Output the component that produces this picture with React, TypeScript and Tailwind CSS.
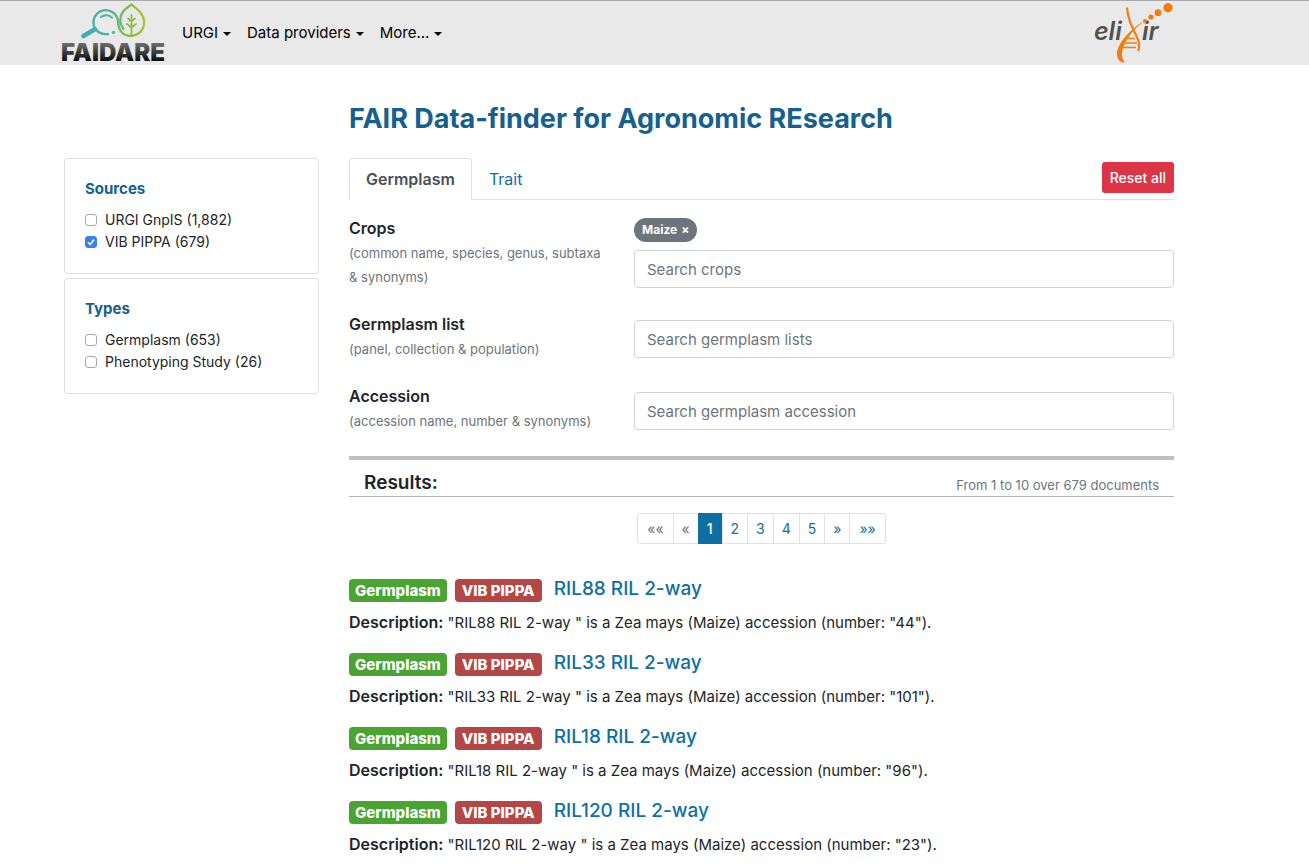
import { useState } from "react";

const FONT = "font-['Inter','Noto_Sans',sans-serif]";

function FaidareLogo() {
  return (
    <svg width="108" height="64" viewBox="0 -2 108 64" role="img" aria-label="Faidare">
      <defs>
        <linearGradient id="mark" x1="20" y1="0" x2="86" y2="0" gradientUnits="userSpaceOnUse">
          <stop offset="0" stopColor="#3fa9b8" />
          <stop offset="0.45" stopColor="#4fb79a" />
          <stop offset="0.7" stopColor="#86bd45" />
          <stop offset="1" stopColor="#a9c62f" />
        </linearGradient>
        <linearGradient id="word" x1="0" y1="39" x2="0" y2="58" gradientUnits="userSpaceOnUse">
          <stop offset="0" stopColor="#747474" />
          <stop offset="1" stopColor="#0c0c0c" />
        </linearGradient>
      </defs>
      <g fill="none" stroke="url(#mark)" strokeLinecap="round">
        <path d="M22.500 33L34 26.300" strokeWidth="4.500" />
        <path
          d="M47 31C41 32 35 29 33 23A12.300 12.300 0 1 1 57 18C57 25 60 33 70 33C79 32 84 26 83 17C82 10 76 6 70.500 1.500C64 6 58.500 10 59.500 19C60 22 61 24 62.500 26"
          strokeWidth="2.300"
        />
        <path d="M40 14C43 11.500 48 11.500 51 14.500" strokeWidth="2" />
        <path d="M70.500 32V12M70.500 18.500L67 15.500M70.500 18.500L74 15.500M70.500 24.500L66 21M70.500 24.500L75 21" strokeWidth="1.800" />
      </g>
      <circle cx="52.500" cy="29.500" r="1.700" fill="#55b894" />
      <text x="0" y="58" fontFamily="Inter" fontWeight="900" fontSize="24" fill="url(#word)">
        FAIDARE
      </text>
    </svg>
  );
}

function ElixirLogo() {
  return (
    <svg width="82" height="62" viewBox="0 0 82 62" role="img" aria-label="Elixir">
      <g fontFamily="Inter" fontWeight="600" fontSize="25" fontStyle="italic" fill="#54524f">
        <text x="2" y="38">eli</text>
        <text x="50" y="38">ir</text>
      </g>
      <g fill="#f07d10">
        <path d="M53 18.500C38 27 25 42 25 52C25 57 28 60.500 33 60.500C29 56 29.500 50 31.500 45C35 35 43 26 53 18.500Z" />
        <circle cx="53" cy="19" r="2" />
        <circle cx="59" cy="15" r="2.600" />
        <circle cx="66" cy="10.700" r="3.400" />
        <circle cx="76" cy="5.700" r="4.700" />
      </g>
      <g fill="none" stroke="#f07d10">
        <path d="M35 5.500C36 17 40 26 44.500 34C47.500 40 48.500 44 46 49" strokeWidth="2.200" />
        <path d="M35 36.500H43M33 41H45M31 45.500H44" strokeWidth="1.600" />
      </g>
    </svg>
  );
}

function FacetCard({ title, items }: { title: string; items: { label: string; checked?: boolean }[] }) {
  return (
    <section className="h-[116px] rounded border border-[#dfdfdf] px-5 pt-[18px]">
      <h2 className="text-[15px] leading-6 font-bold text-[#14608f]">{title}</h2>
      <div className="mt-2">
        {items.map((item) => (
          <label key={item.label} className="flex h-[22px] items-center gap-2 text-sm leading-[22px]">
            <input
              type="checkbox"
              defaultChecked={item.checked}
              className="size-3 appearance-none rounded-[3px] border border-[#a9a9a9] bg-white bg-center checked:border-[#3580f6] checked:bg-[#3580f6] checked:bg-[url('data:image/svg+xml,%3Csvg%20xmlns=%22http://www.w3.org/2000/svg%22%20viewBox=%220%200%2010%2010%22%3E%3Cpath%20d=%22M2%205.300l2.200%202.200L8%202.500%22%20fill=%22none%22%20stroke=%22white%22%20stroke-width=%221.600%22/%3E%3C/svg%3E')]"
            />
            {item.label}
          </label>
        ))}
      </div>
    </section>
  );
}

function Field({
  id,
  label,
  hint,
  placeholder,
  chip,
}: {
  id: string;
  label: string;
  hint: string;
  placeholder: string;
  chip?: string;
}) {
  return (
    <div className={chip ? "grid h-[72px] grid-cols-[17fr_36fr] gap-[30px]" : "grid h-12 grid-cols-[17fr_36fr] gap-[30px]"}>
      <div>
        <label htmlFor={id} className="block text-base leading-[25px] font-semibold">
          {label}
        </label>
        <p className="text-[13px] leading-6 text-[#6c757d]">{hint}</p>
      </div>
      <div className={chip ? "pt-[2px]" : "pt-2"}>
        {chip && (
          <button type="button" className="mb-2 flex h-6 items-center gap-1 rounded-full bg-[#6c757d] px-2 text-xs font-bold text-white">
            {chip} <span>×</span>
          </button>
        )}
        <input
          id={id}
          type="text"
          placeholder={placeholder}
          className="h-[38px] w-full rounded border border-[#ced4da] px-3 text-[15px] placeholder:text-[#6c757d]"
        />
      </div>
    </div>
  );
}

const PAGES = ["««", "«", "1", "2", "3", "4", "5", "»", "»»"];

function pageClass(page: string) {
  if (page === "1") return "-my-px -ml-px px-[9px] bg-[#0f6fa3] font-medium text-white";
  if (page === "««") return "px-[9px] text-[#6c757d]";
  if (page === "«") return "px-2 text-[#6c757d]";
  if (page === "»»") return "px-[9px] text-[#0f6fa3]";
  return "px-2 text-[#0f6fa3]";
}

const RESULTS = [
  { name: "RIL88 RIL 2-way", number: "44" },
  { name: "RIL33 RIL 2-way", number: "101" },
  { name: "RIL18 RIL 2-way", number: "96" },
  { name: "RIL120 RIL 2-way", number: "23" },
];

export default function App() {
  const [tab, setTab] = useState("Germplasm");
  const active = "-mb-px rounded-t border border-b-0 border-[#dee2e6] bg-white px-4 pb-[2px] text-base font-semibold text-[#495057]";
  const idle = "px-[17px] text-base text-[#0f6fa3]";

  return (
    <div className={`${FONT} bg-white text-[#212529]`}>
      <header className="h-[65px] border-t border-[#a9a9a9] bg-[#e9e9e9]">
        <div className="mr-8 ml-[61px] flex h-16 max-w-[1113px] items-center">
          <a href="#">
            <FaidareLogo />
          </a>
          <nav className="ml-[13px] flex gap-4 pt-px text-[15px] text-black">
            {["URGI", "Data providers", "More..."].map((item) => (
              <button key={item} type="button" className="flex items-center gap-[5px]">
                {item}
                <svg width="8" height="4" viewBox="0 0 8 4" aria-hidden="true">
                  <path d="M0 0H8L4 4Z" fill="currentColor" />
                </svg>
              </button>
            ))}
          </nav>
          <a href="#" className="ml-auto">
            <ElixirLogo />
          </a>
        </div>
      </header>

      <div className="mr-8 ml-16 grid max-w-[1110px] grid-cols-[17fr_55fr] gap-[30px]">
        <aside className="flex flex-col gap-1 pt-[93px]">
          <FacetCard title="Sources" items={[{ label: "URGI GnpIS (1,882)" }, { label: "VIB PIPPA (679)", checked: true }]} />
          <FacetCard title="Types" items={[{ label: "Germplasm (653)" }, { label: "Phenotyping Study (26)" }]} />
        </aside>

        <main>
          <h1 className="pt-[37px] text-[27px] leading-[34px] font-bold text-[#14608f]">FAIR Data-finder for Agronomic REsearch</h1>

          <div className="mt-[22px] flex h-[42px] border-b border-[#dee2e6]">
            {["Germplasm", "Trait"].map((name) => (
              <button key={name} type="button" onClick={() => setTab(name)} className={tab === name ? active : idle}>
                {name}
              </button>
            ))}
            <button type="button" className="mt-1 ml-auto h-[31px] rounded-[3px] bg-[#dc3545] px-2 text-sm font-medium text-white">
              Reset all
            </button>
          </div>

          <form className="flex flex-col gap-6 py-4 pb-6">
            <Field id="crops" label="Crops" hint="(common name, species, genus, subtaxa & synonyms)" placeholder="Search crops" chip="Maize" />
            <Field id="lists" label="Germplasm list" hint="(panel, collection & population)" placeholder="Search germplasm lists" />
            <Field id="accession" label="Accession" hint="(accession name, number & synonyms)" placeholder="Search germplasm accession" />
          </form>

          <div className="flex h-[41px] items-end justify-between border-t-4 border-b border-t-[#c0c0c0] border-b-[#b8b8b8] px-[15px]">
            <h2 className="text-[19px] leading-[26px] font-semibold">Results:</h2>
            <p className="text-[13px] leading-[22px] text-[#6c757d]">From 1 to 10 over 679 documents</p>
          </div>

          <nav aria-label="Pages" className="mt-4 flex justify-center text-sm">
            <div className="flex h-[31px] divide-x divide-[#dee2e6] rounded-[3px] border border-[#dee2e6]">
              {PAGES.map((page) => (
                <button key={page} type="button" className={pageClass(page)}>
                  {page}
                </button>
              ))}
            </div>
          </nav>

          <div className="mt-8">
            {RESULTS.map((r) => (
              <article key={r.name} className="h-[74px]">
                <div className="flex h-[26px] items-end">
                  <span className="mr-2 h-[23px] rounded bg-[#49a432] px-[6px] text-[15px] leading-[23px] font-extrabold text-white">Germplasm</span>
                  <span className="mr-3 h-[23px] rounded bg-[#b44646] px-[7px] text-[15px] leading-[23px] font-extrabold text-white">VIB PIPPA</span>
                  <a href="#" className="text-[19px] leading-[26px] font-medium text-[#0f6fa3]">
                    {r.name}
                  </a>
                </div>
                <p className="mt-2 text-[15px] leading-6">
                  <strong className="text-base leading-6 font-semibold">Description:</strong> "{r.name} " is a Zea mays (Maize) accession (number: "
                  {r.number}").
                </p>
              </article>
            ))}
          </div>
        </main>
      </div>
    </div>
  );
}
